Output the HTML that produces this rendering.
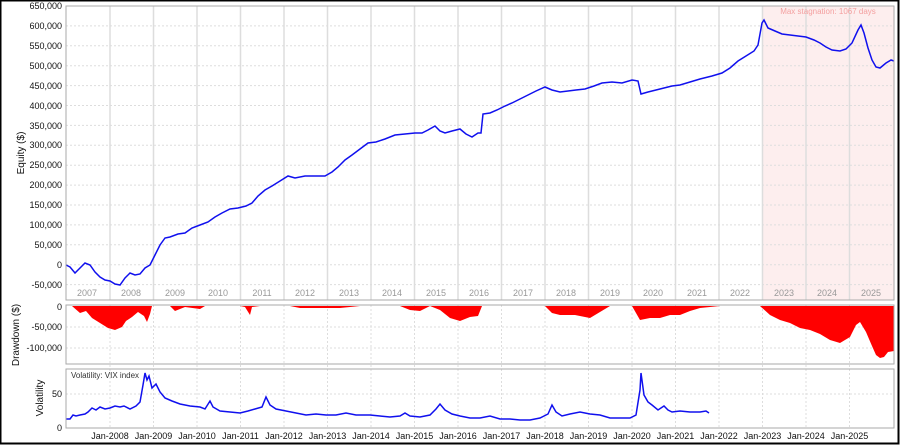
<!DOCTYPE html>
<html><head><meta charset="utf-8"><style>
html,body{margin:0;padding:0;background:#fff}
svg{display:block;font-family:"Liberation Sans",Arial,sans-serif}
</style></head><body>
<svg width="900" height="445" viewBox="0 0 900 445" xmlns="http://www.w3.org/2000/svg">
<rect x="0.5" y="0.5" width="898" height="443" fill="#fff" stroke="#000" stroke-width="2"/>
<!-- equity panel -->
<rect x="762" y="6" width="132" height="294" fill="#fdeeee"/>
<g stroke="#ddd" stroke-dasharray="2,2" stroke-width="1">
<line x1="66" x2="894" y1="25.9" y2="25.9"/><line x1="66" x2="894" y1="45.8" y2="45.8"/><line x1="66" x2="894" y1="65.7" y2="65.7"/><line x1="66" x2="894" y1="85.6" y2="85.6"/><line x1="66" x2="894" y1="105.5" y2="105.5"/><line x1="66" x2="894" y1="125.4" y2="125.4"/><line x1="66" x2="894" y1="145.3" y2="145.3"/><line x1="66" x2="894" y1="165.2" y2="165.2"/><line x1="66" x2="894" y1="185.1" y2="185.1"/><line x1="66" x2="894" y1="205" y2="205"/><line x1="66" x2="894" y1="224.9" y2="224.9"/><line x1="66" x2="894" y1="244.8" y2="244.8"/><line x1="66" x2="894" y1="264.7" y2="264.7"/><line x1="66" x2="894" y1="284.6" y2="284.6"/>
<line x1="66" x2="894" y1="327" y2="327"/><line x1="66" x2="894" y1="348" y2="348"/>
<line x1="66" x2="894" y1="394" y2="394"/>
</g>
<g stroke="#ddd" stroke-width="1.5">
<line x1="110" x2="110" y1="6" y2="300"/><line x1="153.5" x2="153.5" y1="6" y2="300"/><line x1="197" x2="197" y1="6" y2="300"/><line x1="240.5" x2="240.5" y1="6" y2="300"/><line x1="284" x2="284" y1="6" y2="300"/><line x1="327.5" x2="327.5" y1="6" y2="300"/><line x1="371" x2="371" y1="6" y2="300"/><line x1="414.5" x2="414.5" y1="6" y2="300"/><line x1="458" x2="458" y1="6" y2="300"/><line x1="501.5" x2="501.5" y1="6" y2="300"/><line x1="545" x2="545" y1="6" y2="300"/><line x1="588.5" x2="588.5" y1="6" y2="300"/><line x1="632" x2="632" y1="6" y2="300"/><line x1="675.5" x2="675.5" y1="6" y2="300"/><line x1="719" x2="719" y1="6" y2="300"/><line x1="762.5" x2="762.5" y1="6" y2="300"/><line x1="806" x2="806" y1="6" y2="300"/><line x1="849.5" x2="849.5" y1="6" y2="300"/>
</g>
<g stroke="#ddd" stroke-dasharray="2,2" stroke-width="1">
<line x1="110" x2="110" y1="305" y2="428"/><line x1="153.5" x2="153.5" y1="305" y2="428"/><line x1="197" x2="197" y1="305" y2="428"/><line x1="240.5" x2="240.5" y1="305" y2="428"/><line x1="284" x2="284" y1="305" y2="428"/><line x1="327.5" x2="327.5" y1="305" y2="428"/><line x1="371" x2="371" y1="305" y2="428"/><line x1="414.5" x2="414.5" y1="305" y2="428"/><line x1="458" x2="458" y1="305" y2="428"/><line x1="501.5" x2="501.5" y1="305" y2="428"/><line x1="545" x2="545" y1="305" y2="428"/><line x1="588.5" x2="588.5" y1="305" y2="428"/><line x1="632" x2="632" y1="305" y2="428"/><line x1="675.5" x2="675.5" y1="305" y2="428"/><line x1="719" x2="719" y1="305" y2="428"/><line x1="762.5" x2="762.5" y1="305" y2="428"/><line x1="806" x2="806" y1="305" y2="428"/><line x1="849.5" x2="849.5" y1="305" y2="428"/>
</g>
<g font-size="9" fill="#999" text-anchor="middle">
<text x="87" y="296">2007</text><text x="131" y="296">2008</text><text x="175" y="296">2009</text><text x="218" y="296">2010</text><text x="262" y="296">2011</text><text x="305" y="296">2012</text><text x="349" y="296">2013</text><text x="392" y="296">2014</text><text x="436" y="296">2015</text><text x="479" y="296">2016</text><text x="523" y="296">2017</text><text x="566" y="296">2018</text><text x="610" y="296">2019</text><text x="653" y="296">2020</text><text x="697" y="296">2021</text><text x="740" y="296">2022</text><text x="784" y="296">2023</text><text x="827" y="296">2024</text><text x="871" y="296">2025</text>
</g>
<text x="828" y="14" font-size="8" fill="#f4a0a0" text-anchor="middle">Max stagnation: 1067 days</text>
<polyline fill="none" stroke="#1010ee" stroke-width="1.5" points="66,265 70,267 75,273 80,268 85,263 90,265 95,272 100,277 105,280 110,281 115,284 120,285 125,278 130,273 135,275 140,274 145,268 150,265 155,255 160,245 165,238 170,237 178,234 185,233 192,228 200,225 208,222 215,217 222,213 230,209 238,208 246,206 252,203 258,196 265,190 272,186 280,181 288,176 295,178 305,176 315,176 325,176 332,172 338,167 345,160 352,155 360,149 368,143 376,142 385,139 395,135 405,134 415,133 422,133 428,130 435,126 440,131 445,133 452,131 460,129 466,134 472,137 478,133 481,133 483,114 490,113 497,110 505,106 512,103 520,99 528,95 536,91 545,87 552,90 560,92 568,91 576,90 585,89 594,86 602,83 612,82 622,83 632,80 638,81 641,94 648,92 656,90 664,88 672,86 680,85 690,82 700,79 712,76 722,73 730,68 738,61 746,56 754,51 758,45 762,23 764,20 768,28 775,31 782,34 790,35 798,36 806,37 814,40 820,43 826,47 832,50 840,51 846,49 852,43 858,30 861,25 864,33 868,48 872,60 876,67 880,68 886,63 891,60 894,61"/>
<rect x="66" y="6" width="828" height="294" fill="none" stroke="#aaa"/>
<!-- drawdown -->
<polygon fill="#ff0000" points="66,306 72,306 80,313 86,311 92,318 100,323 108,328 115,330 122,327 126,321 132,317 138,312 144,316 147,322 150,314 152,306 170,306 175,311 185,307 200,309 205,306 240,306 245,307 250,315 252,307 260,306 290,306 300,308 320,308 340,308 360,306 400,306 410,310 420,311 430,306 440,310 450,318 460,321 470,317 478,316 482,306 545,306 552,313 560,315 575,315 590,318 600,312 610,306 632,306 640,320 650,318 660,318 670,315 680,315 690,311 700,308 720,306 760,306 770,315 780,320 790,323 800,328 810,330 820,334 830,340 840,343 850,337 856,325 860,322 866,332 872,346 876,355 880,358 884,357 888,352 894,351 894,306"/>
<rect x="66" y="305" width="828" height="59" fill="none" stroke="#aaa"/>
<!-- volatility -->
<polyline fill="none" stroke="#1010ee" stroke-width="1.5" points="66,419 70,419 73,415 76,416 80,415 85,414 88,412 92,408 96,410 100,407 105,409 110,408 115,406 120,407 124,406 130,409 136,406 140,402 143,385 145,373 147,380 149,376 152,388 156,384 160,392 165,398 172,401 180,404 190,406 200,407 205,409 210,401 213,407 220,411 230,412 240,413 248,411 255,409 262,407 266,397 270,405 276,409 286,411 296,413 306,415 316,414 326,415 336,415 346,413 356,415 370,415 380,416 390,417 400,416 405,413 410,416 420,417 430,415 436,409 440,404 445,410 452,414 460,416 470,418 480,418 490,416 500,419 510,419 520,420 530,420 540,418 548,414 552,405 556,412 562,416 570,414 580,412 590,414 600,415 610,418 620,418 630,418 636,415 640,390 641,373 644,395 648,402 652,405 658,410 664,406 668,410 672,412 680,411 690,412 700,412 706,411 709,413"/>
<text x="71" y="378" font-size="8" fill="#333">Volatility: VIX index</text>
<rect x="66" y="369" width="828" height="59" fill="none" stroke="#aaa"/>
<!-- y labels -->
<g font-size="9" fill="#111" text-anchor="end">
<text x="62" y="9">650,000</text><text x="62" y="29">600,000</text><text x="62" y="49">550,000</text><text x="62" y="69">500,000</text><text x="62" y="89">450,000</text><text x="62" y="109">400,000</text><text x="62" y="129">350,000</text><text x="62" y="148">300,000</text><text x="62" y="168">250,000</text><text x="62" y="188">200,000</text><text x="62" y="208">150,000</text><text x="62" y="228">100,000</text><text x="62" y="248">50,000</text><text x="62" y="268">0</text><text x="62" y="288">-50,000</text>
<text x="62" y="310">0</text><text x="62" y="330">-50,000</text><text x="62" y="351">-100,000</text>
<text x="62" y="397">50</text><text x="62" y="431">0</text>
</g>
<g font-size="10" fill="#111" text-anchor="middle">
<text transform="translate(24,153) rotate(-90)">Equity ($)</text>
<text transform="translate(19,335) rotate(-90)">Drawdown ($)</text>
<text transform="translate(43,398) rotate(-90)">Volatility</text>
</g>
<g font-size="9" fill="#111" text-anchor="middle">
<text x="110" y="439">Jan-2008</text><text x="153.5" y="439">Jan-2009</text><text x="197" y="439">Jan-2010</text><text x="240.5" y="439">Jan-2011</text><text x="284" y="439">Jan-2012</text><text x="327.5" y="439">Jan-2013</text><text x="371" y="439">Jan-2014</text><text x="414.5" y="439">Jan-2015</text><text x="458" y="439">Jan-2016</text><text x="501.5" y="439">Jan-2017</text><text x="545" y="439">Jan-2018</text><text x="588.5" y="439">Jan-2019</text><text x="632" y="439">Jan-2020</text><text x="675.5" y="439">Jan-2021</text><text x="719" y="439">Jan-2022</text><text x="762.5" y="439">Jan-2023</text><text x="806" y="439">Jan-2024</text><text x="849.5" y="439">Jan-2025</text>
</g>
</svg>
</body></html>
